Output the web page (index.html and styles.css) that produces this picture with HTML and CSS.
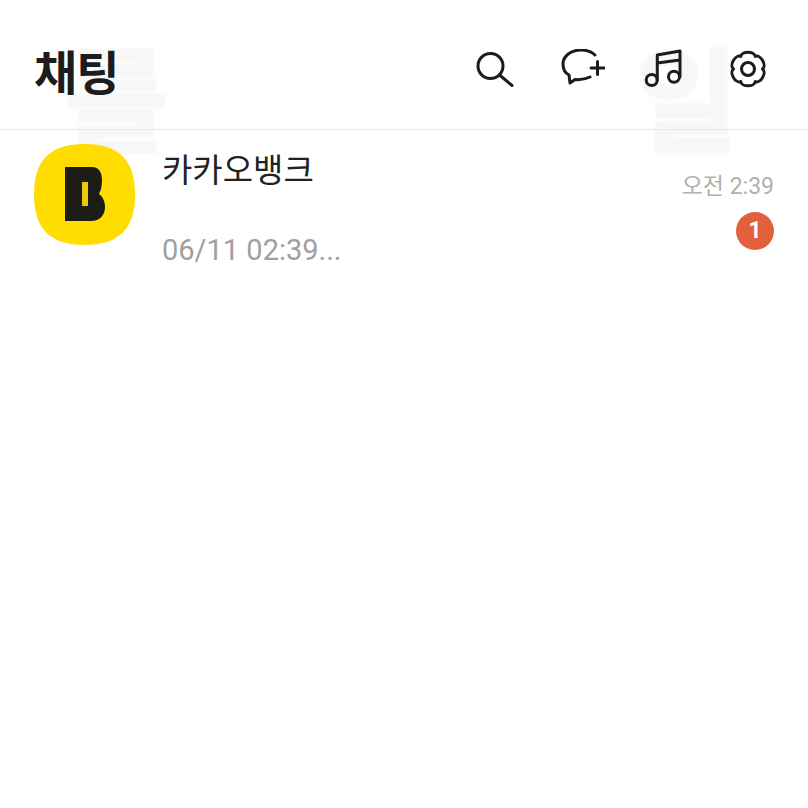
FILE: index.html
```html
<!DOCTYPE html>
<html lang="ko">
<head>
    <meta charset="UTF-8">
    <meta name="viewport" content="width=device-width, initial-scale=1.0">
    <title>채팅</title>
    <link rel="stylesheet" href="styles.css">
</head>
<body>

    <div class="ghost ghost-left">를</div>
    <div class="ghost ghost-right">일</div>

    <header class="top-bar">
        <h1 class="title">채팅</h1>
        <div class="actions">
            <!-- 검색 -->
            <svg class="icon" width="40" height="40" viewBox="0 0 40 40">
                <circle cx="15.5" cy="17" r="12.5"/>
                <path d="M24.5 26 L37 36.5"/>
            </svg>
            <!-- 새 채팅 -->
            <svg class="icon icon-chat" width="44" height="40" viewBox="0 0 44 40">
                <path d="M34 6 C31 3 26 1 20 1 C10 1 2 7 2 15 C2 20 4 24 8 26 L9 34 L14 30.5 C20 31 25 30 29 28"/>
                <path d="M30 19 H43 M36.5 12.5 V25.5"/>
            </svg>
            <!-- 뮤직 -->
            <svg class="icon icon-music" width="40" height="40" viewBox="0 0 40 40">
                <circle cx="7.7" cy="31" r="5.5"/>
                <circle cx="30" cy="27.7" r="5.5"/>
                <path d="M13.3 31 V6 L36 2 V27.7 M13.3 14 L36 11"/>
            </svg>
            <!-- 설정 -->
            <svg class="icon icon-gear" width="40" height="40" viewBox="0 0 40 40">
                <path d="M12.75 7.44 C13.33 1.7 26.67 1.7 27.25 7.44 C32.53 5.06 39.2 16.6 34.5 20 C39.2 23.4 32.53 34.94 27.25 32.56 C26.67 38.3 13.33 38.3 12.75 32.56 C7.47 34.94 .8 23.4 5.5 20 C.8 16.6 7.47 5.06 12.75 7.44 Z"/>
                <circle cx="20" cy="20" r="6.5"/>
            </svg>
        </div>
    </header>

    <div class="chat-row">
        <svg class="avatar" width="101" height="101" viewBox="0 0 101 101">
            <path class="logo-bg" d="M50.5 0 C85 0 101 16 101 50.5 C101 85 85 101 50.5 101 C16 101 0 85 0 50.5 C0 16 16 0 50.5 0 Z"/>
            <path class="logo-b" d="M31 23 H58 C66 23 68 30 68 36 C68 42 67 46 65 50 C69 53 71 58 71 63 C71 71 66 77 57 77 H31 Z"/>
            <rect class="logo-slot" x="48" y="38" width="6" height="24"/>
        </svg>
        <div class="chat-body">
            <div class="chat-name">카카오뱅크</div>
            <div class="chat-preview">06/11 02:39...</div>
        </div>
        <div class="chat-meta">
            <div class="chat-time">오전 2:39</div>
            <div class="badge">1</div>
        </div>
    </div>

</body>
</html>
```
FILE: styles.css
```css
body {
    margin: 0;
    height: 808px;
    background-color: #fff;
    font-family: Roboto, "Noto Sans CJK KR", sans-serif;
    overflow: hidden;
    position: relative;
}
.ghost {
    position: absolute;
    top: 38px;
    font-size: 112px;
    line-height: 112px;
    font-weight: 700;
    color: #f7f7f7;
    -webkit-text-stroke: 3px #f7f7f7;
    filter: blur(1px);
    font-family: "Noto Sans CJK KR", sans-serif;
}
.ghost-left {
    left: 65px;
}
.ghost-right {
    left: 635px;
}
.top-bar {
    position: relative;
    display: flex;
    justify-content: space-between;
    align-items: center;
    height: 120px;
    padding: 9px 40px 0 34px;
    border-bottom: 1px solid #e8e8e8;
}
.title {
    margin: 0;
    font-size: 47px;
    font-weight: 700;
    color: #1c1c1c;
    letter-spacing: -1px;
    font-family: "Noto Sans CJK KR", sans-serif;
}
.actions {
    display: flex;
    align-items: center;
}
.icon {
    fill: none;
    stroke: #1c1c1c;
    stroke-width: 3;
    stroke-linecap: round;
    stroke-linejoin: round;
}
.icon-chat {
    margin-left: 46px;
}
.icon-music {
    margin-left: 39px;
}
.icon-gear {
    margin-left: 44px;
}
.chat-row {
    position: relative;
    display: flex;
    padding: 14px 34px 0;
}
.logo-bg {
    fill: #ffdd00;
}
.logo-b {
    fill: #1e1c17;
}
.logo-slot {
    fill: #ecc90c;
}
.chat-body {
    flex: 1;
    margin-left: 27px;
}
.chat-name {
    font-size: 33px;
    line-height: 48px;
    color: #222;
    font-family: "Noto Sans CJK KR", sans-serif;
}
.chat-preview {
    margin-top: 39px;
    font-size: 29px;
    line-height: 38px;
    color: #a0a0a0;
}
.chat-meta {
    display: flex;
    flex-direction: column;
    align-items: flex-end;
    padding-top: 29px;
}
.chat-time {
    font-size: 23px;
    line-height: 28px;
    color: #b0b0b0;
}
.badge {
    margin-top: 11px;
    width: 38px;
    height: 38px;
    border-radius: 50%;
    background-color: #e2603c;
    color: #fff;
    font-size: 23px;
    font-weight: 700;
    line-height: 38px;
    text-align: center;
}
```
